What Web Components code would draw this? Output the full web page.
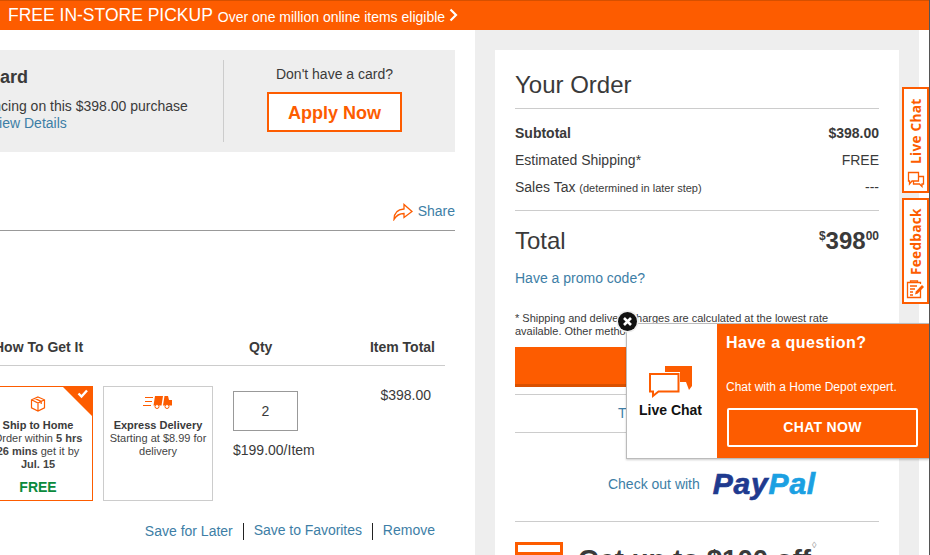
<!DOCTYPE html>
<html>
  <head>
    <meta charset="utf-8" />
    <meta name="viewport" content="width=device-width" />
    <title>Cart</title>
    <style>
      html, body { margin: 0; padding: 0; background: #fff; }
      body { font-family: "Liberation Sans", Arial, sans-serif; color: #3a3a3a; overflow: hidden; }
    </style>
  </head>
  <body>
    <checkout-page></checkout-page>

    <script>
      const ORANGE = "#fd5c00";
      const LINK = "#3d7ea6";

      // small base class, every element only brings its own template
      class Base extends HTMLElement {
        connectedCallback() {
          if (!this.shadowRoot) {
            this.attachShadow({ mode: "open" }).innerHTML = this.render();
          }
        }
      }

      class CheckoutPage extends Base {
        render() {
          return `
          <style>
            :host { display: block; position: relative; width: 929px; height: 555px; overflow: hidden; border-right: 1px solid #555; }
            .main { display: flex; height: 525px; }
            side-tabs { position: absolute; left: 902px; top: 87px; }
            chat-popup { position: absolute; left: 626px; top: 323px; }
          </style>
          <promo-bar></promo-bar>
          <div class="main">
            <cart-column></cart-column>
            <order-column></order-column>
          </div>
          <side-tabs></side-tabs>
          <chat-popup></chat-popup>
        `;
        }
      }

      class PromoBar extends Base {
        render() {
          return `
          <style>
            :host { display: flex; align-items: center; box-sizing: border-box; height: 30px; padding: 0 0 0 8px; background: ${ORANGE}; border-top: 1px solid #d65000; color: #fff; white-space: nowrap; }
            .big { font-size: 17.5px; }
            .small { font-size: 14px; margin-left: 5px; position: relative; top: 1px; }
            svg { margin-left: 4px; margin-top: -2px; }
          </style>
          <span class="big">FREE IN-STORE PICKUP</span>
          <span class="small">Over one million online items eligible</span>
          <svg width="9" height="14" viewBox="0 0 9 14"><path d="M1.5 1.5 L7 7 L1.5 12.5" fill="none" stroke="#fff" stroke-width="2.2"/></svg>
        `;
        }
      }

      class CartColumn extends Base {
        render() {
          return `
          <style>
            :host { display: block; flex: 0 0 475px; box-sizing: border-box; width: 475px; padding: 20px 20px 0 0; overflow: hidden; font-size: 14px; }
          </style>
          <finance-panel></finance-panel>
          <share-row></share-row>
          <cart-table></cart-table>
        `;
        }
      }

      class FinancePanel extends Base {
        render() {
          return `
          <style>
            :host { display: flex; box-sizing: border-box; height: 102px; padding: 10px 0; background: #eee; }
            .left { flex: 0 0 224px; box-sizing: border-box; border-right: 1px solid #ccc; padding-top: 7px; white-space: nowrap; overflow: hidden; }
            .title { font-size: 18px; font-weight: bold; line-height: 20px; margin-left: -13px; }
            .offer { line-height: 17px; margin: 11px 0 0 -34px; }
            .details { line-height: 17px; margin-left: -10px; color: ${LINK}; }
            .right { flex: 1; display: flex; flex-direction: column; align-items: center; padding: 6px 10px 0 0; }
            .ask { line-height: 17px; }
            .apply { box-sizing: border-box; width: 135px; height: 40px; margin-top: 9px; padding-top: 2px; border: 2px solid ${ORANGE}; background: #fff; color: ${ORANGE}; font-size: 18px; font-weight: bold; display: flex; align-items: center; justify-content: center; }
          </style>
          <div class="left">
            <div class="title">Card</div>
            <div class="offer">Financing on this $398.00 purchase</div>
            <div class="details">View Details</div>
          </div>
          <div class="right">
            <div class="ask">Don't have a card?</div>
            <div class="apply">Apply Now</div>
          </div>
        `;
        }
      }

      class ShareRow extends Base {
        render() {
          return `
          <style>
            :host { display: flex; justify-content: flex-end; align-items: center; gap: 5px; height: 22px; margin-top: 48px; padding-bottom: 8px; border-bottom: 1px solid #999; color: ${LINK}; }
          </style>
          <svg width="20" height="20" viewBox="0 0 20 20"><path d="M1 18.5 C1 12 4 8.5 11 8 L11 3.5 L19 10.5 L11 16.5 L11 12.5 C6.5 12.5 3.5 14 1 18.5 Z" fill="none" stroke="${ORANGE}" stroke-width="1.3" stroke-linejoin="miter"/></svg>
          <span>Share</span>
        `;
        }
      }

      class CartTable extends Base {
        render() {
          return `
          <style>
            :host { display: block; width: 462px; margin: 107px 0 0 -17px; }
            .head { display: grid; grid-template-columns: 253px 1fr auto; box-sizing: border-box; height: 28px; padding: 0 10px 0 11px; line-height: 18px; font-weight: bold; border-bottom: 1px solid #ccc; }
            .head .qty { padding-left: 2px; }
            .row { display: flex; margin-top: 20px; }
            .cards { display: flex; gap: 10px; }
            .qty-col { margin: 5px 0 0 20px; width: 140px; }
            .qty-box { box-sizing: border-box; width: 65px; height: 40px; border: 1px solid #999; display: flex; align-items: center; justify-content: center; }
            .each { margin-top: 10px; line-height: 18px; }
            .total { flex: 1; text-align: right; padding-right: 14px; line-height: 18px; }
            .links { display: flex; justify-content: flex-end; margin: 21px 10px 0 0; line-height: 18px; color: ${LINK}; }
            .links span + span { margin-left: 10px; padding-left: 10px; border-left: 1px solid #222; line-height: 15px; margin-top: 1px; }
            .links .fav { letter-spacing: -0.05px; }
            b { font-weight: bold; }
            .free { color: #0a8a3c; font-size: 14px; font-weight: bold; }
          </style>
          <div class="head">
            <span>How To Get It</span>
            <span class="qty">Qty</span>
            <span>Item Total</span>
          </div>
          <div class="row">
            <div class="cards">
              <delivery-card selected>
                <svg slot="icon" width="16" height="16" viewBox="0 0 16 16" fill="none" stroke="${ORANGE}" stroke-width="1.2"><path d="M8 1 L14.5 3.8 L14.5 11.8 L8 15 L1.5 11.8 L1.5 3.8 Z M1.5 3.8 L8 7 L14.5 3.8 M8 7 L8 15 M4.8 2.4 L11.2 5.4 L11.2 8"/></svg>
                <strong slot="title">Ship to Home</strong>
                Order within <b>5 hrs</b><br><b>26 mins</b> get it by<br><b>Jul. 15</b>
                <span slot="price" class="free">FREE</span>
              </delivery-card>
              <delivery-card>
                <svg slot="icon" width="30" height="14" viewBox="0 0 30 14" fill="${ORANGE}"><path d="M0 10 H8 V11 H0 Z M2 6 H9 V7 H2 Z M2 2 H10 V3 H2 Z M12 1 H20 L18.5 10.5 H10.5 Z M21.5 1 H25 L26 5 H29 V10.5 H20 Z"/><circle cx="14" cy="11.5" r="2" fill="#fff" stroke="${ORANGE}"/><circle cx="24" cy="11.5" r="2" fill="#fff" stroke="${ORANGE}"/></svg>
                <strong slot="title">Express Delivery</strong>
                Starting at $8.99 for<br>delivery
              </delivery-card>
            </div>
            <div class="qty-col">
              <div class="qty-box">2</div>
              <div class="each">$199.00/Item</div>
            </div>
            <div class="total">$398.00</div>
          </div>
          <div class="links">
            <span>Save for Later</span><span class="fav">Save to Favorites</span><span>Remove</span>
          </div>
        `;
        }
      }

      class DeliveryCard extends Base {
        render() {
          return `
          <style>
            :host { display: flex; flex-direction: column; align-items: center; position: relative; box-sizing: border-box; width: 110px; height: 115px; border: 1px solid #ccc; text-align: center; font-size: 11px; line-height: 13px; color: #444; white-space: nowrap; }
            :host([selected]) { border-color: ${ORANGE}; }
            .icon { height: 16px; margin-top: 9px; display: flex; align-items: center; }
            :host(:not([selected])) .icon { margin-top: 7px; }
            .title { margin-top: 7px; font-weight: bold; color: #3a3a3a; }
            :host(:not([selected])) .title { margin-top: 9px; }
            .price { margin-top: 6px; line-height: 20px; }
            .corner { position: absolute; top: 0; right: 0; width: 29px; height: 29px; display: none; }
            :host([selected]) .corner { display: block; }
          </style>
          <svg class="corner" viewBox="0 0 29 29"><path d="M0 0 H29 V29 Z" fill="${ORANGE}"/><path d="M15.5 6.5 L18.5 9.5 L24 3.5" fill="none" stroke="#fff" stroke-width="2.4"/></svg>
          <div class="icon"><slot name="icon"></slot></div>
          <div class="title"><slot name="title"></slot></div>
          <div><slot></slot></div>
          <div class="price"><slot name="price"></slot></div>
        `;
        }
      }

      class OrderColumn extends Base {
        render() {
          return `
          <style>
            :host { display: block; box-sizing: border-box; width: 444px; height: 525px; padding: 20px 20px 0; background: #eee; }
          </style>
          <order-card></order-card>
        `;
        }
      }

      class OrderCard extends Base {
        render() {
          return `
          <style>
            :host { display: block; box-sizing: border-box; height: 505px; padding: 20px 20px 0; background: #fff; font-size: 14px; overflow: hidden; }
            .h { font-size: 24px; line-height: 30px; padding-bottom: 8px; border-bottom: 1px solid #ccc; }
            .rows { padding: 11px 0 9px; border-bottom: 1px solid #ccc; }
            .r { display: flex; justify-content: space-between; height: 27px; line-height: 27px; }
            .r.bold { font-weight: bold; }
            small { font-size: 11px; }
            .total { display: flex; justify-content: space-between; margin-top: 15px; font-size: 24px; line-height: 30px; }
            .amount { font-weight: bold; }
            .amount sup { font-size: 12px; line-height: 0; vertical-align: 9px; }
            .promo { margin-top: 13px; line-height: 18px; color: ${LINK}; }
            .fine { margin-top: 25px; font-size: 11px; line-height: 13px; height: 26px; white-space: nowrap; }
            .btn { box-sizing: border-box; height: 40px; margin-top: 9px; background: ${ORANGE}; border-bottom: 3px solid #d95000; }
            .t { margin-top: 7px; box-sizing: border-box; height: 39px; border-top: 1px solid #ccc; border-bottom: 1px solid #ccc; padding-left: 103px; line-height: 37px; color: ${LINK}; }
            .paypal { display: flex; align-items: center; justify-content: center; gap: 12px; box-sizing: border-box; height: 89px; padding: 13px 0 0 30px; border-bottom: 1px solid #ccc; color: ${LINK}; }
            .logo { font-size: 30px; line-height: 30px; font-weight: bold; font-style: italic; letter-spacing: 0.8px; margin: 1px 0 0 1px; -webkit-text-stroke: 0.7px; }
            .logo i:first-child { color: #1f3a8f; }
            .logo i:last-child { color: #1ba0e2; }
            .card-offer { display: flex; align-items: flex-start; margin-top: 20px; }
            .card-icon { box-sizing: border-box; width: 48px; height: 34px; border: 3px solid ${ORANGE}; background: linear-gradient(#fff 7px, ${ORANGE} 7px, ${ORANGE} 14px, #fff 14px); }
            .get { margin: 3px 0 0 15px; font-size: 27.6px; line-height: 30px; font-weight: bold; white-space: nowrap; display: flex; align-items: flex-start; }
            .get sup { font-size: 9px; line-height: 9px; font-weight: normal; color: #999; margin: -4px 0 0 1px; }
          </style>
          <div class="h">Your Order</div>
          <div class="rows">
            <div class="r bold"><span>Subtotal</span><span>$398.00</span></div>
            <div class="r"><span>Estimated Shipping*</span><span>FREE</span></div>
            <div class="r"><span>Sales Tax <small>(determined in later step)</small></span><span>---</span></div>
          </div>
          <div class="total">
            <span>Total</span>
            <span class="amount"><sup>$</sup>398<sup>00</sup></span>
          </div>
          <div class="promo">Have a promo code?</div>
          <div class="fine">* Shipping and delivery charges are calculated at the lowest rate<br>available. Other methods</div>
          <div class="btn"></div>
          <div class="t">T</div>
          <div class="paypal">
            <span>Check out with</span>
            <span class="logo"><i>Pay</i><i>Pal</i></span>
          </div>
          <div class="card-offer">
            <div class="card-icon"></div>
            <div class="get"><span>Get up to $100 off</span><sup>◊</sup></div>
          </div>
        `;
        }
      }

      class SideTabs extends Base {
        render() {
          return `
          <style>
            :host { display: flex; flex-direction: column; gap: 5px; }
          </style>
          <side-tab>
            Live Chat
            <svg slot="icon" width="18" height="17" viewBox="0 0 18 17" fill="none" stroke="${ORANGE}" stroke-width="1.3"><path d="M1.5 1.5 H11.5 V10 H5 L2.5 13 V10 H1.5 Z"/><path d="M11.5 5.5 H16.5 V13 H15 V15.5 L12.5 13 H6.5 V10"/></svg>
          </side-tab>
          <side-tab>
            Feedback
            <svg slot="icon" width="19" height="19" viewBox="0 0 19 19" fill="none" stroke="${ORANGE}" stroke-width="1.3"><path d="M14.5 7 V17.5 H1.5 V2.5 H14.5 V4"/><path d="M4 6 H11 M4 9 H9 M4 12 H7 M4 15 H7" stroke-width="1.5"/><path d="M9 14.5 L9.8 11.5 L16 5 L18 7 L11.8 13.5 Z" fill="${ORANGE}" stroke="none"/><path d="M4.5 2.5 V1 H11.5 V2.5"/></svg>
          </side-tab>
        `;
        }
      }

      class SideTab extends Base {
        render() {
          return `
          <style>
            :host { display: flex; flex-direction: column; align-items: center; box-sizing: border-box; width: 27px; height: 106px; border: 2px solid ${ORANGE}; background: #fff; color: ${ORANGE}; font-family: "Open Sans", sans-serif; font-weight: 700; font-size: 13.6px; letter-spacing: 0.3px; white-space: nowrap; }
            .text { writing-mode: vertical-rl; transform: rotate(180deg); height: 68px; margin: 7px 1px 0 0; line-height: 23px; text-align: left; }
            .icon { margin-top: auto; margin-bottom: 3px; display: flex; }
          </style>
          <div class="text"><slot></slot></div>
          <div class="icon"><slot name="icon"></slot></div>
        `;
        }
      }

      class ChatPopup extends Base {
        render() {
          return `
          <style>
            :host { display: flex; box-sizing: border-box; width: 303px; height: 136px; border: 1px solid #bbb; border-right: 0; background: #fff; box-shadow: 0 1px 2px rgba(0,0,0,.2); }
            .close { position: absolute; left: -9px; top: -12px; width: 19px; height: 19px; border-radius: 50%; background: #111; box-shadow: 0 0 0 1.5px #eee; display: flex; align-items: center; justify-content: center; }
            .pic { flex: 0 0 90px; display: flex; flex-direction: column; align-items: center; padding: 42px 3px 0 0; box-sizing: border-box; }
            .pic span { margin-top: 2px; font-size: 14px; line-height: 18px; font-weight: bold; color: #111; }
            .ask { flex: 1; box-sizing: border-box; padding: 9px 11px 0 9px; background: ${ORANGE}; color: #fff; }
            h3 { margin: 0; font-size: 16px; line-height: 20px; font-weight: bold; letter-spacing: .5px; }
            p { margin: 26px 0 0; font-size: 12px; line-height: 16px; }
            .now { box-sizing: border-box; height: 39px; margin: 13px 0 0 1px; padding-bottom: 2px; border: 2px solid #fff; border-radius: 2px; display: flex; align-items: center; justify-content: center; font-size: 14px; font-weight: bold; letter-spacing: .3px; }
          </style>
          <div class="close"><svg width="11" height="11" viewBox="0 0 11 11"><path d="M2 2 L9 9 M9 2 L2 9" stroke="#fff" stroke-width="2.6"/></svg></div>
          <div class="pic">
            <svg width="44" height="33" viewBox="0 0 44 33">
              <path d="M16 0 H43 V20 L40 24 L37 16 H16 Z" fill="${ORANGE}"/>
              <path d="M0 6 H31 V27 H10 L3 32.5 V27 H0 Z" fill="#fff"/>
              <path d="M1 8 H29.5 V25.5 H9.5 L4 30 V25.5 H1 Z" fill="#fff" stroke="${ORANGE}" stroke-width="2"/>
            </svg>
            <span>Live Chat</span>
          </div>
          <div class="ask">
            <h3>Have a question?</h3>
            <p>Chat with a Home Depot expert.</p>
            <div class="now">CHAT NOW</div>
          </div>
        `;
        }
      }

      customElements.define("checkout-page", CheckoutPage);
      customElements.define("promo-bar", PromoBar);
      customElements.define("cart-column", CartColumn);
      customElements.define("finance-panel", FinancePanel);
      customElements.define("share-row", ShareRow);
      customElements.define("cart-table", CartTable);
      customElements.define("delivery-card", DeliveryCard);
      customElements.define("order-column", OrderColumn);
      customElements.define("order-card", OrderCard);
      customElements.define("side-tabs", SideTabs);
      customElements.define("side-tab", SideTab);
      customElements.define("chat-popup", ChatPopup);
    </script>
  </body>
</html>
